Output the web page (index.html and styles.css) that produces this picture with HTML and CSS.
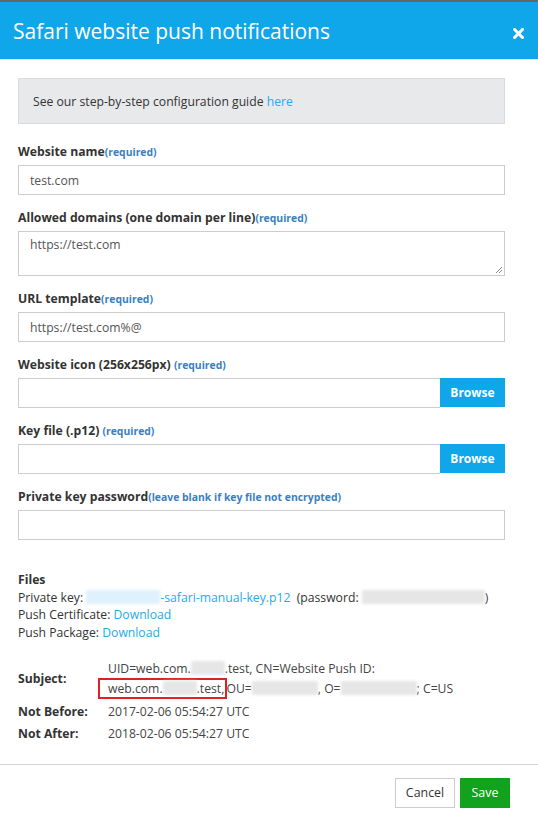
FILE: index.html
```html
<!DOCTYPE html>
<html>
<head>
<meta charset="utf-8">
<link rel="stylesheet" href="styles.css">
</head>
<body>
<div class="topbar"></div>
<div class="modal">
  <div class="header">
    <h1 class="title">Safari website push notifications</h1>
    <svg class="close" width="11" height="11" viewBox="0 0 11 11"><path d="M1.5 1.5 L9.5 9.5 M9.5 1.5 L1.5 9.5" stroke="#fff" stroke-width="3" stroke-linecap="square"/></svg>
  </div>
  <div class="body">
    <div class="info"><span>See our step-by-step configuration guide <a class="link">here</a></span></div>

    <div class="group">
      <label class="label">Website name<span class="req">(required)</span></label>
      <div class="input">test.com</div>
    </div>
    <div class="group">
      <label class="label">Allowed domains (one domain per line)<span class="req">(required)</span></label>
      <div class="input textarea">https://test.com
        <svg class="grip" width="9" height="9" viewBox="0 0 9 9"><path d="M8 2 L2 8 M8 5 L5 8" stroke="#888" stroke-width="1"/></svg>
      </div>
    </div>
    <div class="group">
      <label class="label">URL template<span class="req">(required)</span></label>
      <div class="input">https://test.com%@</div>
    </div>
    <div class="group">
      <label class="label">Website icon (256x256px) <span class="req">(required)</span></label>
      <div class="file"><div class="file-field"></div><div class="browse">Browse</div></div>
    </div>
    <div class="group">
      <label class="label">Key file (.p12) <span class="req">(required)</span></label>
      <div class="file"><div class="file-field"></div><div class="browse">Browse</div></div>
    </div>
    <div class="group">
      <label class="label">Private key password<span class="req">(leave blank if key file not encrypted)</span></label>
      <div class="input"></div>
    </div>

    <div class="files">
      <div class="files-title">Files</div>
      <div class="nowrap">Private key: <a class="link"><span class="blur blur-blue" style="width:74px"></span>-safari-manual-key.p12</a>&nbsp; (password: <span class="blur" style="width:123px"></span>)</div>
      <div>Push Certificate: <a class="link">Download</a></div>
      <div>Push Package: <a class="link">Download</a></div>
    </div>

    <div class="cert">
      <div class="cert-label subject">Subject:</div>
      <div class="cert-value">UID=web.com.<span class="blur" style="width:34px"></span>.test, CN=Website Push ID:<br><span class="mark">web.com.<span class="blur" style="width:34px"></span>.test,</span> OU=<span class="blur" style="width:66px"></span>, O=<span class="blur" style="width:76px"></span>; C=US</div>
      <div class="cert-label">Not Before:</div>
      <div class="cert-value single">2017-02-06 05:54:27 UTC</div>
      <div class="cert-label">Not After:</div>
      <div class="cert-value single">2018-02-06 05:54:27 UTC</div>
    </div>
  </div>
  <div class="footer">
    <button class="btn btn-cancel">Cancel</button>
    <button class="btn btn-save">Save</button>
  </div>
</div>
</body>
</html>
```

FILE: styles.css
```css
* { box-sizing: border-box; }
html, body { margin: 0; padding: 0; background: #fff; }
body {
  width: 538px;
  height: 822px;
  overflow: hidden;
  font-family: "Open Sans", "DejaVu Sans", sans-serif;
  font-size: 12.2px;
  color: #333;
}
.topbar { height: 2px; background: #666; }
.modal { display: flex; flex-direction: column; }
.header {
  height: 58px;
  background: #10a6ea;
  border-bottom: 1px solid #e5e5e5;
  display: flex;
  align-items: center;
  justify-content: space-between;
  padding: 0 14px 0 13px;
}
.title {
  margin: 0;
  font-size: 21px;
  font-weight: 400;
  color: #fff;
  line-height: 1;
  position: relative;
  top: 1px;
}
.close { margin-top: 6px; }
.body { padding: 18px 33px 0 18px; }
.info {
  height: 46px;
  background: #e8e9eb;
  border: 1px solid #dadbdd;
  padding: 0 0 0 14px;
  display: flex;
  align-items: center;
  color: #333;
  margin-bottom: 18px;
}
.link { color: #27a9ec; text-decoration: none; }
.group { display: flex; flex-direction: column; margin-bottom: 13px; }
.label {
  font-weight: 700;
  font-size: 12.2px;
  height: 20px;
  line-height: 20px;
  margin-bottom: 3px;
  color: #333;
  white-space: nowrap;
}
.req { font-size: 10.4px; color: #3a7fc0; font-weight: 700; line-height: 1; }
.input {
  height: 30px;
  border: 1px solid #ccc;
  padding: 0 11px;
  display: flex;
  align-items: center;
  color: #555;
}
.textarea {
  height: 45px;
  align-items: flex-start;
  padding-top: 4px;
  position: relative;
}
.grip { position: absolute; right: 1px; bottom: 1px; }
.file { display: flex; height: 30px; }
.file-field { flex: 1; border: 1px solid #ccc; border-right: none; }
.browse {
  width: 65px;
  background: #10a6ea;
  color: #fff;
  font-weight: 700;
  font-size: 12px;
  display: flex;
  align-items: center;
  justify-content: center;
  height: 29px;
}
.files { margin-top: 31px; line-height: 17.5px; color: #333; }
.nowrap { white-space: nowrap; }
.files-title { font-weight: 700; }
.blur {
  display: inline-block;
  height: 14px;
  vertical-align: -2px;
  background: #e6e6e6;
  filter: blur(1.5px);
}
.blur-blue { background: #dff1fc; }
.cert {
  margin-top: 19px;
  display: grid;
  grid-template-columns: 90px 1fr;
  row-gap: 4px;
  padding-bottom: 21px;
}
.cert-label {
  font-weight: 700;
  display: flex;
  align-items: center;
  line-height: 18px;
}
.cert-value { line-height: 17.5px; color: #444; }
.single { display: flex; align-items: center; }
.mark {
  display: inline-block;
  border: 2px solid #e02020;
  padding: 0 1px 0 8px;
  margin-left: -10px;
  margin-right: -4px;
  line-height: 17px;
}
.footer {
  border-top: 1px solid #d4d4d4;
  display: flex;
  justify-content: flex-end;
  gap: 5px;
  padding: 13px 28px 0 0;
  height: 57px;
}
.btn {
  height: 30px;
  font-family: "Open Sans", "DejaVu Sans", sans-serif;
  font-size: 12.4px;
  padding: 0;
  border-radius: 0;
}
.btn-cancel {
  width: 60px;
  background: #fff;
  border: 1px solid #ccc;
  color: #333;
}
.btn-save {
  width: 50px;
  background: #12a21d;
  border: 1px solid #12a21d;
  color: #fff;
}
```
